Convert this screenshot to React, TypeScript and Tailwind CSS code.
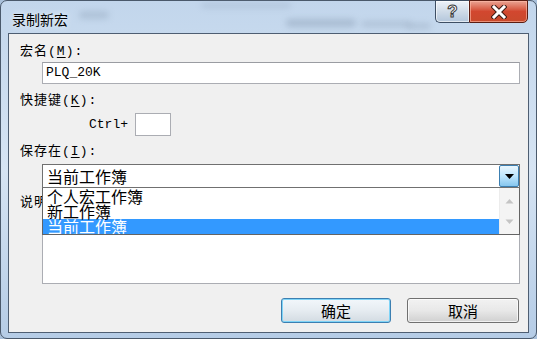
import React from "react";

const LABEL = "h-[16px] leading-[16px] text-[13px] tracking-[1px] text-black font-['Liberation_Mono','Noto_Sans_CJK_SC',monospace]";
const LIST = "font-['Noto_Sans_CJK_SC',sans-serif] text-[16px] leading-[15px]";

function Label({ text, hot, ...rest }: { text: string; hot: string; className?: string }) {
  return (
    <div className={`${LABEL} ${rest.className ?? ""}`}>
      {text}(<span className="underline underline-offset-2">{hot}</span>):
    </div>
  );
}

function CaptionButtons() {
  return (
    <div className="flex -mt-px h-[23px]">
      {/* help */}
      <div className="w-[34px] h-full border border-[#3d4e63] border-r-0 rounded-bl-[5px] bg-linear-to-b from-[#eef3f9] via-[#cfdbe8] to-[#b3c6db] shadow-[inset_0_0_0_1px_rgba(255,255,255,0.6)] flex items-center justify-center">
        <span className="text-[17px] leading-none font-bold text-white font-['Liberation_Sans',sans-serif] [-webkit-text-stroke:1px_#3a3a3a]">
          ?
        </span>
      </div>
      {/* close */}
      <div className="w-[59px] h-full border border-[#5a1d12] rounded-br-[5px] bg-linear-to-b from-[#e9a393] via-[#d2472f] to-[#c94a2c] shadow-[inset_0_0_0_1px_rgba(255,190,170,0.6)] flex items-center justify-center">
        <svg width="16" height="14" viewBox="0 0 16 14">
          <path d="M3 2 L13 12 M13 2 L3 12" stroke="#3b1a14" strokeWidth="5" strokeLinecap="square" />
          <path d="M3 2 L13 12 M13 2 L3 12" stroke="#ffffff" strokeWidth="3" strokeLinecap="square" />
        </svg>
      </div>
    </div>
  );
}

function ScrollArrow({ up }: { up?: boolean }) {
  return (
    <div className="flex-1 flex items-center justify-center">
      <svg width="9" height="6" viewBox="0 0 9 6">
        <path d={up ? "M0.5 5.5 L4.5 1 L8.5 5.5 Z" : "M0.5 0.5 L4.5 5 L8.5 0.5 Z"} fill="#c4c4c4" />
      </svg>
    </div>
  );
}

export default function App() {
  return (
    <div className="w-[537px] h-[339px] overflow-hidden bg-[#a9c0da]">
      <div className="relative w-full h-full rounded-[7px] border border-[#4a596b] bg-linear-to-b from-[#c2d6ec] via-[#d6e4f3] to-[#b5cce6] flex flex-col">
        {/* blurred glass smudges */}
        <div className="absolute left-[78px] top-[10px] w-[30px] h-[8px] rounded-full bg-[#8ea2b8] opacity-40 blur-[3px]" />
        <div className="absolute left-[200px] top-[2px] w-[90px] h-[5px] rounded-full bg-[#8a9cb2] opacity-30 blur-[3px]" />
        <div className="absolute left-[285px] top-[18px] w-[70px] h-[8px] rounded-full bg-[#7f93aa] opacity-40 blur-[3px]" />
        <div className="absolute left-[360px] top-[20px] w-[50px] h-[6px] rounded-full bg-[#8799ae] opacity-35 blur-[3px]" />
        <div className="absolute left-[405px] top-[22px] w-[25px] h-[6px] rounded-full bg-[#8799ae] opacity-35 blur-[3px]" />

        {/* title bar */}
        <div className="relative h-[32px] flex items-start justify-between pl-[11px] pr-[8px]">
          <span className="mt-[10px] text-[14px] leading-[16px] text-black font-['Noto_Sans_CJK_SC',sans-serif] [text-shadow:0_0_6px_rgba(255,255,255,0.9)]">
            录制新宏
          </span>
          <CaptionButtons />
        </div>

        {/* client area */}
        <div className="relative mx-[7px] h-[300px] border border-[#4e5e72] bg-[#f0f0f0] pl-[11px] pr-[8px] pt-[10px] flex flex-col">
          <Label text="宏名" hot="M" />
          <div className="mt-[2px] ml-[22px] h-[22px] border border-[#abadb3] border-t-[#9a9ca2] bg-white flex items-center pl-[3px]">
            <span className="text-[13px] text-black font-['Liberation_Mono',monospace]">PLQ_20K</span>
          </div>

          <Label text="快捷键" hot="K" className="mt-[9px]" />
          <div className="mt-[4px] h-[23px] flex items-center">
            <span className="ml-[69px] text-[13px] text-black font-['Liberation_Mono',monospace]">Ctrl+</span>
            <div className="ml-[7px] w-[36px] h-[23px] border border-[#abadb3] bg-white" />
          </div>

          <Label text="保存在" hot="I" className="mt-[8px]" />
          <div className="relative z-10 mt-[4px] ml-[22px]">
            <div className="h-[24px] border border-[#707070] bg-white flex items-stretch">
              <div className={`flex-1 flex items-center pl-[4px] text-black ${LIST}`}>当前工作簿</div>
              <div className="w-[20px] border border-[#3c7fb1] rounded-[2px] bg-linear-to-b from-[#eaf6fd] via-[#bee6fd] to-[#86c6ee] flex items-center justify-center">
                <svg width="9" height="5" viewBox="0 0 9 5">
                  <path d="M0 0 L9 0 L4.5 5 Z" fill="#000" />
                </svg>
              </div>
            </div>
            {/* open dropdown list */}
            <div className="absolute left-0 right-0 top-full h-[47px] border border-[#646464] border-t-0 bg-white flex overflow-hidden">
              <div className="flex-1 pt-px">
                <div className={`h-[15px] pl-[4px] text-black ${LIST}`}>个人宏工作簿</div>
                <div className={`h-[15px] pl-[4px] text-black ${LIST}`}>新工作簿</div>
                <div className={`h-[15px] pl-[4px] bg-[#3399ff] text-white ${LIST}`}>当前工作簿</div>
              </div>
              <div className="w-[20px] bg-[#f4f4f4] border-l border-[#ececec] flex flex-col py-[2px]">
                <ScrollArrow up />
                <ScrollArrow />
              </div>
            </div>
          </div>

          <Label text="说明" hot="D" className="mt-[7px]" />
          <div className="mt-[2px] ml-[22px] h-[71px] border border-[#abadb3] border-t-[#9a9ca2] bg-white" />

          <div className="mt-[14px] flex justify-end gap-[16px] pr-px">
            <button className="w-[110px] h-[25px] rounded-[3px] border border-[#3c7fb1] bg-linear-to-b from-[#f2f7fb] via-[#e6ecf1] to-[#d3dbe2] shadow-[inset_0_0_0_1px_#7fd4f7] text-[15px] text-black font-['Noto_Sans_CJK_SC',sans-serif] leading-none">
              确定
            </button>
            <button className="w-[112px] h-[25px] rounded-[3px] border border-[#707070] bg-linear-to-b from-[#f2f2f2] via-[#e8e8e8] to-[#d0d0d0] shadow-[inset_0_0_0_1px_rgba(255,255,255,0.7)] text-[15px] text-black font-['Noto_Sans_CJK_SC',sans-serif] leading-none">
              取消
            </button>
          </div>
        </div>
      </div>
    </div>
  );
}
